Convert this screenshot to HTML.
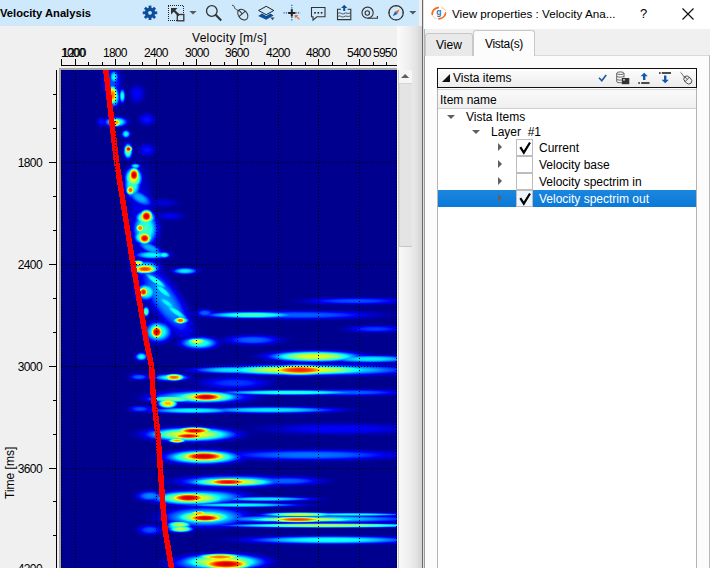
<!DOCTYPE html>
<html><head><meta charset="utf-8">
<style>
*{margin:0;padding:0;box-sizing:border-box}
html,body{width:710px;height:568px;overflow:hidden;background:#f0f0f0;font-family:"Liberation Sans",sans-serif;font-size:12px;color:#000}
body{position:relative}
.a{position:absolute;white-space:nowrap}
#hdr{left:0;top:0;width:419px;height:26px;background:#cee8fc}
#title{left:0;top:6px;font-weight:bold;font-size:11.2px;line-height:14px}
#sgrad{left:397px;top:26px;width:25px;height:542px;background:linear-gradient(to right,#fafafa 0%,#f8f8f8 12%,#efefef 45%,#e4e4e4 75%,#d2d2d2 100%)}
#split{left:422px;top:0;width:3px;height:568px;background:linear-gradient(to right,#6a6a6a 0,#6a6a6a 1px,#e0e0e0 1px,#e0e0e0 2px,#b4b4b4 2px)}
#dtitle{left:424px;top:0;width:286px;height:29px;background:#fff}
#dt{left:452px;top:7px;font-size:11.7px;line-height:14px}
.xl{font-size:12px;letter-spacing:-0.75px;line-height:12px;top:47px}
.yl{font-size:12px;letter-spacing:-0.6px;line-height:12px;right:668px}
#panel{left:424px;top:55px;width:286px;height:513px;background:#fcfcfc;border-top:1px solid #d9d9d9;border-right:1px solid #b8b8b8;border-left:1px solid #9c9c9c}
#tabv{left:425px;top:33px;width:48px;height:23px;background:#e9e9e9;border:1px solid #c8c8c8;border-bottom:none;border-radius:3px 3px 0 0}
#tabs{left:473px;top:30px;width:62px;height:26px;background:#fcfcfc;border:1px solid #c8c8c8;border-bottom:none;border-radius:3px 3px 0 0}
#tbox{left:437px;top:68px;width:260px;height:20px;border:1.5px solid #111;background:linear-gradient(#fdfdfd,#ececec)}
#list{left:437px;top:88px;width:260px;height:500px;background:#fff;border:1px solid #b4b4b4;border-top:none}
#ihdr{left:438px;top:89px;width:258px;height:20px;background:linear-gradient(#fafafa,#efefef);border-top:1px solid #d9d9d9;border-bottom:1px solid #d0d0d0}
.cb{position:absolute;left:516px;width:17px;height:17px;background:#fff;border:1px solid #bdbdbd}
.tx{position:absolute;font-size:12px;line-height:14px}
</style></head>
<body>
<div id="hdr" class="a"></div>
<div id="title" class="a">Velocity Analysis</div>
<svg class="a" style="left:130px;top:0" width="292" height="26" viewBox="130 0 292 26">
<!-- gear -->
<g transform="translate(150,12.8)" fill="#0c4e9c">
<circle r="5.2"/>
<g><rect x="-1.4" y="-7.2" width="2.8" height="3"/><rect x="-1.4" y="4.2" width="2.8" height="3"/><rect x="-7.2" y="-1.4" width="3" height="2.8"/><rect x="4.2" y="-1.4" width="3" height="2.8"/></g>
<g transform="rotate(45)"><rect x="-1.4" y="-7.2" width="2.8" height="3"/><rect x="-1.4" y="4.2" width="2.8" height="3"/><rect x="-7.2" y="-1.4" width="3" height="2.8"/><rect x="4.2" y="-1.4" width="3" height="2.8"/></g>
<circle r="1.9" fill="#cee8fc"/>
</g>
<!-- select -->
<path d="M168 5.5 L184 5.5 M168 20.5 L177 20.5 M168.5 6 L168.5 20 M183.5 6 L183.5 14" fill="none" stroke="#222" stroke-width="1" stroke-dasharray="1 1"/>
<rect x="177.3" y="14.5" width="6.5" height="6.3" fill="#cee8fc" stroke="#333" stroke-width="1.3"/>
<path d="M171 8 L177.5 8 L175.3 10.2 L179.8 14.7 L178.2 16.3 L173.7 11.8 L171 14.5 Z" fill="#333"/>
<path d="M189.4 11 L196.6 11 L193 14.6 Z" fill="#505a64"/>
<!-- magnifier -->
<circle cx="211.8" cy="11" r="5.3" fill="none" stroke="#333" stroke-width="1.3"/>
<path d="M215.6 14.8 L221.2 20.4" stroke="#333" stroke-width="2.1"/>
<!-- mouse -->
<path d="M232 5.5 C234.5 4.5 234 8 235.5 9 C236.8 10 237.5 9.8 238.6 11.2" fill="none" stroke="#333" stroke-width="1"/>
<g transform="translate(242.8,14.6) rotate(-40)" fill="none" stroke="#333" stroke-width="1">
<ellipse rx="4.3" ry="6"/><path d="M-4.3 -1 L4.3 -1 M0 -6 L0 -1"/>
</g>
<!-- layers -->
<path d="M266.2 6.3 L273.8 10.5 L266.2 14.7 L258.6 10.5 Z" fill="none" stroke="#222" stroke-width="1"/>
<path d="M258.2 16 L262 13.6 L266.2 16 L270.4 13.6 L273.6 15.6 L266.2 19.8 Z" fill="#0c4e9c"/>
<path d="M270.4 17.6 L274.6 17.6 L272.5 20.2 Z" fill="#444"/>
<!-- crosshair -->
<path d="M283.5 12.9 L300.5 12.9 M291.8 4.8 L291.8 21.2" stroke="#1c5cb0" stroke-width="1.2" stroke-dasharray="1.2 1.2"/>
<path d="M288.2 12.9 L295.4 12.9 M291.8 9.3 L291.8 16.5" stroke="#222" stroke-width="2"/>
<path d="M294.6 15 L298.2 15 L297 16.2 L299.8 19 L299 19.8 L296.2 17 L294.9 18.3 Z" fill="#ee6a1e"/>
<!-- comment -->
<path d="M311.5 7.5 L325 7.5 L325 16.8 L317 16.8 L313 20 L313 16.8 L311.5 16.8 Z" fill="none" stroke="#333" stroke-width="1.1"/>
<rect x="314.2" y="12" width="1.6" height="1.6" fill="#222"/><rect x="317.5" y="12" width="1.6" height="1.6" fill="#222"/><rect x="320.8" y="12" width="1.6" height="1.6" fill="#222"/>
<!-- upload chart -->
<path d="M341 9.3 L337.5 9.3 L337.5 19.6 L350.8 19.6 L350.8 9.3 L347.5 9.3" fill="none" stroke="#333" stroke-width="1.1"/>
<path d="M338 13.5 C340 11.5 342 15 344 13.5 C346 12 348 14.5 350.5 12.8 M338 16.6 C340 14.6 342 18 344 16.6 C346 15 348 17.6 350.5 15.8" fill="none" stroke="#444" stroke-width="0.9"/>
<path d="M344.2 4.8 L347.3 8 L345.2 8 L345.2 11 L343.2 11 L343.2 8 L341.1 8 Z" fill="#0c4e9c"/>
<!-- tape -->
<circle cx="367.6" cy="12.7" r="5.6" fill="none" stroke="#333" stroke-width="1.1"/><path d="M367.6 18.3 L377.4 18.3 L377.4 16" fill="none" stroke="#333" stroke-width="1.1"/>
<circle cx="367.3" cy="13" r="2.2" fill="none" stroke="#333" stroke-width="1.1"/>
<!-- compass -->
<circle cx="396.1" cy="12.8" r="7.2" fill="none" stroke="#333" stroke-width="1.2"/>
<path d="M396.1 5 L396.1 6.6 M396.1 19 L396.1 20.6 M388.3 12.8 L389.9 12.8 M402.3 12.8 L403.9 12.8" stroke="#333" stroke-width="1"/>
<path d="M399.5 9.4 L397.4 13.9 L395 11.5 Z" fill="#ee6a1e"/>
<path d="M392.7 16.2 L395 11.5 L397.4 13.9 Z" fill="#1c5cb0"/>
<path d="M409.2 11 L416.4 11 L412.8 14.6 Z" fill="#505a64"/>
</svg>


<!-- axes labels -->
<div class="a" style="left:192px;top:31px;font-size:12px;letter-spacing:0.3px;line-height:14px">Velocity [m/s]</div>
<div class="a xl" style="left:61px">1000</div>
<div class="a xl" style="left:62px">1200</div>
<div class="a xl" style="left:103px">1800</div>
<div class="a xl" style="left:144px">2400</div>
<div class="a xl" style="left:185px">3000</div>
<div class="a xl" style="left:225px">3600</div>
<div class="a xl" style="left:266px">4200</div>
<div class="a xl" style="left:306px">4800</div>
<div class="a xl" style="left:347px">5400</div>
<div class="a xl" style="left:373px">5950</div>

<svg class="a" style="left:0;top:0" width="420" height="568" viewBox="0 0 420 568">
  <!-- x axis -->
  <g fill="#000">
    <rect x="61" y="65" width="336" height="1"/>
    <rect x="61" y="59" width="1" height="7"/>
    <rect x="75" y="59" width="1" height="7"/>
    <rect x="88" y="62" width="1" height="4"/>
    <rect x="102" y="62" width="1" height="4"/>
    <rect x="115" y="59" width="1" height="7"/>
    <rect x="129" y="62" width="1" height="4"/>
    <rect x="142" y="62" width="1" height="4"/>
    <rect x="156" y="59" width="1" height="7"/>
    <rect x="169" y="62" width="1" height="4"/>
    <rect x="183" y="62" width="1" height="4"/>
    <rect x="196" y="59" width="1" height="7"/>
    <rect x="210" y="62" width="1" height="4"/>
    <rect x="224" y="62" width="1" height="4"/>
    <rect x="237" y="59" width="1" height="7"/>
    <rect x="251" y="62" width="1" height="4"/>
    <rect x="264" y="62" width="1" height="4"/>
    <rect x="278" y="59" width="1" height="7"/>
    <rect x="291" y="62" width="1" height="4"/>
    <rect x="305" y="62" width="1" height="4"/>
    <rect x="318" y="59" width="1" height="7"/>
    <rect x="332" y="62" width="1" height="4"/>
    <rect x="346" y="62" width="1" height="4"/>
    <rect x="359" y="59" width="1" height="7"/>
    <rect x="373" y="62" width="1" height="4"/>
    <rect x="386" y="62" width="1" height="4"/>
    <!-- y axis -->
    <rect x="56" y="70" width="1" height="498"/>
    <rect x="53" y="94" width="4" height="1"/>
    <rect x="53" y="128" width="4" height="1"/>
    <rect x="49" y="162" width="8" height="1"/>
    <rect x="53" y="196" width="4" height="1"/>
    <rect x="53" y="230" width="4" height="1"/>
    <rect x="49" y="264" width="8" height="1"/>
    <rect x="53" y="298" width="4" height="1"/>
    <rect x="53" y="332" width="4" height="1"/>
    <rect x="49" y="366" width="8" height="1"/>
    <rect x="53" y="400" width="4" height="1"/>
    <rect x="53" y="434" width="4" height="1"/>
    <rect x="49" y="468" width="8" height="1"/>
    <rect x="53" y="501" width="4" height="1"/>
    <rect x="53" y="535" width="4" height="1"/>
  </g>
  <!-- plot frame -->
  <rect x="59" y="68" width="339" height="502" fill="#a8a8a8"/><rect x="397" y="68" width="1" height="500" fill="#f4f4f4"/>
  <rect x="61" y="70" width="336" height="498" fill="#00008f"/>
</svg>
<!--HEAT--><svg class="a" style="left:61px;top:70px" width="336" height="498" viewBox="0 0 336 498">
<defs><radialGradient id="g0"><stop offset="0" stop-color="rgb(51,51,51)"/><stop offset="0.1" stop-color="rgb(51,51,51)"/><stop offset="0.2" stop-color="rgb(49,49,49)"/><stop offset="0.3" stop-color="rgb(45,45,45)"/><stop offset="0.4" stop-color="rgb(38,38,38)"/><stop offset="0.5" stop-color="rgb(29,29,29)"/><stop offset="0.6" stop-color="rgb(19,19,19)"/><stop offset="0.7" stop-color="rgb(11,11,11)"/><stop offset="0.8" stop-color="rgb(5,5,5)"/><stop offset="0.9" stop-color="rgb(2,2,2)"/><stop offset="1" stop-color="rgb(0,0,0)"/></radialGradient><radialGradient id="g1"><stop offset="0" stop-color="rgb(97,97,97)"/><stop offset="0.1" stop-color="rgb(96,96,96)"/><stop offset="0.2" stop-color="rgb(93,93,93)"/><stop offset="0.3" stop-color="rgb(86,86,86)"/><stop offset="0.4" stop-color="rgb(73,73,73)"/><stop offset="0.5" stop-color="rgb(55,55,55)"/><stop offset="0.6" stop-color="rgb(37,37,37)"/><stop offset="0.7" stop-color="rgb(21,21,21)"/><stop offset="0.8" stop-color="rgb(10,10,10)"/><stop offset="0.9" stop-color="rgb(4,4,4)"/><stop offset="1" stop-color="rgb(0,0,0)"/></radialGradient><radialGradient id="g2"><stop offset="0" stop-color="rgb(112,112,112)"/><stop offset="0.1" stop-color="rgb(112,112,112)"/><stop offset="0.2" stop-color="rgb(108,108,108)"/><stop offset="0.3" stop-color="rgb(99,99,99)"/><stop offset="0.4" stop-color="rgb(84,84,84)"/><stop offset="0.5" stop-color="rgb(64,64,64)"/><stop offset="0.6" stop-color="rgb(42,42,42)"/><stop offset="0.7" stop-color="rgb(24,24,24)"/><stop offset="0.8" stop-color="rgb(11,11,11)"/><stop offset="0.9" stop-color="rgb(4,4,4)"/><stop offset="1" stop-color="rgb(0,0,0)"/></radialGradient><radialGradient id="g3"><stop offset="0" stop-color="rgb(194,194,194)"/><stop offset="0.1" stop-color="rgb(193,193,193)"/><stop offset="0.2" stop-color="rgb(187,187,187)"/><stop offset="0.3" stop-color="rgb(172,172,172)"/><stop offset="0.4" stop-color="rgb(145,145,145)"/><stop offset="0.5" stop-color="rgb(110,110,110)"/><stop offset="0.6" stop-color="rgb(73,73,73)"/><stop offset="0.7" stop-color="rgb(41,41,41)"/><stop offset="0.8" stop-color="rgb(19,19,19)"/><stop offset="0.9" stop-color="rgb(7,7,7)"/><stop offset="1" stop-color="rgb(0,0,0)"/></radialGradient><radialGradient id="g4"><stop offset="0" stop-color="rgb(102,102,102)"/><stop offset="0.1" stop-color="rgb(102,102,102)"/><stop offset="0.2" stop-color="rgb(98,98,98)"/><stop offset="0.3" stop-color="rgb(90,90,90)"/><stop offset="0.4" stop-color="rgb(76,76,76)"/><stop offset="0.5" stop-color="rgb(58,58,58)"/><stop offset="0.6" stop-color="rgb(39,39,39)"/><stop offset="0.7" stop-color="rgb(22,22,22)"/><stop offset="0.8" stop-color="rgb(10,10,10)"/><stop offset="0.9" stop-color="rgb(4,4,4)"/><stop offset="1" stop-color="rgb(0,0,0)"/></radialGradient><radialGradient id="g5"><stop offset="0" stop-color="rgb(184,184,184)"/><stop offset="0.1" stop-color="rgb(183,183,183)"/><stop offset="0.2" stop-color="rgb(177,177,177)"/><stop offset="0.3" stop-color="rgb(163,163,163)"/><stop offset="0.4" stop-color="rgb(138,138,138)"/><stop offset="0.5" stop-color="rgb(105,105,105)"/><stop offset="0.6" stop-color="rgb(69,69,69)"/><stop offset="0.7" stop-color="rgb(39,39,39)"/><stop offset="0.8" stop-color="rgb(18,18,18)"/><stop offset="0.9" stop-color="rgb(7,7,7)"/><stop offset="1" stop-color="rgb(0,0,0)"/></radialGradient><radialGradient id="g6"><stop offset="0" stop-color="rgb(36,36,36)"/><stop offset="0.1" stop-color="rgb(36,36,36)"/><stop offset="0.2" stop-color="rgb(34,34,34)"/><stop offset="0.3" stop-color="rgb(32,32,32)"/><stop offset="0.4" stop-color="rgb(27,27,27)"/><stop offset="0.5" stop-color="rgb(20,20,20)"/><stop offset="0.6" stop-color="rgb(14,14,14)"/><stop offset="0.7" stop-color="rgb(8,8,8)"/><stop offset="0.8" stop-color="rgb(4,4,4)"/><stop offset="0.9" stop-color="rgb(1,1,1)"/><stop offset="1" stop-color="rgb(0,0,0)"/></radialGradient><radialGradient id="g7"><stop offset="0" stop-color="rgb(31,31,31)"/><stop offset="0.1" stop-color="rgb(30,30,30)"/><stop offset="0.2" stop-color="rgb(30,30,30)"/><stop offset="0.3" stop-color="rgb(27,27,27)"/><stop offset="0.4" stop-color="rgb(23,23,23)"/><stop offset="0.5" stop-color="rgb(17,17,17)"/><stop offset="0.6" stop-color="rgb(12,12,12)"/><stop offset="0.7" stop-color="rgb(7,7,7)"/><stop offset="0.8" stop-color="rgb(3,3,3)"/><stop offset="0.9" stop-color="rgb(1,1,1)"/><stop offset="1" stop-color="rgb(0,0,0)"/></radialGradient><radialGradient id="g8"><stop offset="0" stop-color="rgb(128,128,128)"/><stop offset="0.1" stop-color="rgb(127,127,127)"/><stop offset="0.2" stop-color="rgb(123,123,123)"/><stop offset="0.3" stop-color="rgb(113,113,113)"/><stop offset="0.4" stop-color="rgb(96,96,96)"/><stop offset="0.5" stop-color="rgb(73,73,73)"/><stop offset="0.6" stop-color="rgb(48,48,48)"/><stop offset="0.7" stop-color="rgb(27,27,27)"/><stop offset="0.8" stop-color="rgb(13,13,13)"/><stop offset="0.9" stop-color="rgb(5,5,5)"/><stop offset="1" stop-color="rgb(0,0,0)"/></radialGradient><radialGradient id="g9"><stop offset="0" stop-color="rgb(224,224,224)"/><stop offset="0.1" stop-color="rgb(223,223,223)"/><stop offset="0.2" stop-color="rgb(216,216,216)"/><stop offset="0.3" stop-color="rgb(199,199,199)"/><stop offset="0.4" stop-color="rgb(168,168,168)"/><stop offset="0.5" stop-color="rgb(128,128,128)"/><stop offset="0.6" stop-color="rgb(85,85,85)"/><stop offset="0.7" stop-color="rgb(48,48,48)"/><stop offset="0.8" stop-color="rgb(22,22,22)"/><stop offset="0.9" stop-color="rgb(8,8,8)"/><stop offset="1" stop-color="rgb(0,0,0)"/></radialGradient><radialGradient id="g10"><stop offset="0" stop-color="rgb(92,92,92)"/><stop offset="0.1" stop-color="rgb(91,91,91)"/><stop offset="0.2" stop-color="rgb(89,89,89)"/><stop offset="0.3" stop-color="rgb(81,81,81)"/><stop offset="0.4" stop-color="rgb(69,69,69)"/><stop offset="0.5" stop-color="rgb(52,52,52)"/><stop offset="0.6" stop-color="rgb(35,35,35)"/><stop offset="0.7" stop-color="rgb(20,20,20)"/><stop offset="0.8" stop-color="rgb(9,9,9)"/><stop offset="0.9" stop-color="rgb(3,3,3)"/><stop offset="1" stop-color="rgb(0,0,0)"/></radialGradient><radialGradient id="g11"><stop offset="0" stop-color="rgb(26,26,26)"/><stop offset="0.1" stop-color="rgb(25,25,25)"/><stop offset="0.2" stop-color="rgb(25,25,25)"/><stop offset="0.3" stop-color="rgb(23,23,23)"/><stop offset="0.4" stop-color="rgb(19,19,19)"/><stop offset="0.5" stop-color="rgb(15,15,15)"/><stop offset="0.6" stop-color="rgb(10,10,10)"/><stop offset="0.7" stop-color="rgb(5,5,5)"/><stop offset="0.8" stop-color="rgb(3,3,3)"/><stop offset="0.9" stop-color="rgb(1,1,1)"/><stop offset="1" stop-color="rgb(0,0,0)"/></radialGradient><radialGradient id="g12"><stop offset="0" stop-color="rgb(153,153,153)"/><stop offset="0.1" stop-color="rgb(152,152,152)"/><stop offset="0.2" stop-color="rgb(148,148,148)"/><stop offset="0.3" stop-color="rgb(135,135,135)"/><stop offset="0.4" stop-color="rgb(115,115,115)"/><stop offset="0.5" stop-color="rgb(87,87,87)"/><stop offset="0.6" stop-color="rgb(58,58,58)"/><stop offset="0.7" stop-color="rgb(33,33,33)"/><stop offset="0.8" stop-color="rgb(15,15,15)"/><stop offset="0.9" stop-color="rgb(6,6,6)"/><stop offset="1" stop-color="rgb(0,0,0)"/></radialGradient><radialGradient id="g13"><stop offset="0" stop-color="rgb(235,235,235)"/><stop offset="0.1" stop-color="rgb(234,234,234)"/><stop offset="0.2" stop-color="rgb(226,226,226)"/><stop offset="0.3" stop-color="rgb(208,208,208)"/><stop offset="0.4" stop-color="rgb(176,176,176)"/><stop offset="0.5" stop-color="rgb(134,134,134)"/><stop offset="0.6" stop-color="rgb(89,89,89)"/><stop offset="0.7" stop-color="rgb(50,50,50)"/><stop offset="0.8" stop-color="rgb(23,23,23)"/><stop offset="0.9" stop-color="rgb(9,9,9)"/><stop offset="1" stop-color="rgb(0,0,0)"/></radialGradient><radialGradient id="g14"><stop offset="0" stop-color="rgb(199,199,199)"/><stop offset="0.1" stop-color="rgb(198,198,198)"/><stop offset="0.2" stop-color="rgb(192,192,192)"/><stop offset="0.3" stop-color="rgb(176,176,176)"/><stop offset="0.4" stop-color="rgb(149,149,149)"/><stop offset="0.5" stop-color="rgb(113,113,113)"/><stop offset="0.6" stop-color="rgb(75,75,75)"/><stop offset="0.7" stop-color="rgb(42,42,42)"/><stop offset="0.8" stop-color="rgb(20,20,20)"/><stop offset="0.9" stop-color="rgb(7,7,7)"/><stop offset="1" stop-color="rgb(0,0,0)"/></radialGradient><radialGradient id="g15"><stop offset="0" stop-color="rgb(76,76,76)"/><stop offset="0.1" stop-color="rgb(76,76,76)"/><stop offset="0.2" stop-color="rgb(74,74,74)"/><stop offset="0.3" stop-color="rgb(68,68,68)"/><stop offset="0.4" stop-color="rgb(57,57,57)"/><stop offset="0.5" stop-color="rgb(44,44,44)"/><stop offset="0.6" stop-color="rgb(29,29,29)"/><stop offset="0.7" stop-color="rgb(16,16,16)"/><stop offset="0.8" stop-color="rgb(8,8,8)"/><stop offset="0.9" stop-color="rgb(3,3,3)"/><stop offset="1" stop-color="rgb(0,0,0)"/></radialGradient><radialGradient id="g16"><stop offset="0" stop-color="rgb(230,230,230)"/><stop offset="0.1" stop-color="rgb(228,228,228)"/><stop offset="0.2" stop-color="rgb(221,221,221)"/><stop offset="0.3" stop-color="rgb(203,203,203)"/><stop offset="0.4" stop-color="rgb(172,172,172)"/><stop offset="0.5" stop-color="rgb(131,131,131)"/><stop offset="0.6" stop-color="rgb(87,87,87)"/><stop offset="0.7" stop-color="rgb(49,49,49)"/><stop offset="0.8" stop-color="rgb(23,23,23)"/><stop offset="0.9" stop-color="rgb(9,9,9)"/><stop offset="1" stop-color="rgb(0,0,0)"/></radialGradient><radialGradient id="g17"><stop offset="0" stop-color="rgb(20,20,20)"/><stop offset="0.1" stop-color="rgb(20,20,20)"/><stop offset="0.2" stop-color="rgb(20,20,20)"/><stop offset="0.3" stop-color="rgb(18,18,18)"/><stop offset="0.4" stop-color="rgb(15,15,15)"/><stop offset="0.5" stop-color="rgb(12,12,12)"/><stop offset="0.6" stop-color="rgb(8,8,8)"/><stop offset="0.7" stop-color="rgb(4,4,4)"/><stop offset="0.8" stop-color="rgb(2,2,2)"/><stop offset="0.9" stop-color="rgb(1,1,1)"/><stop offset="1" stop-color="rgb(0,0,0)"/></radialGradient><radialGradient id="g18"><stop offset="0" stop-color="rgb(163,163,163)"/><stop offset="0.1" stop-color="rgb(162,162,162)"/><stop offset="0.2" stop-color="rgb(157,157,157)"/><stop offset="0.3" stop-color="rgb(145,145,145)"/><stop offset="0.4" stop-color="rgb(122,122,122)"/><stop offset="0.5" stop-color="rgb(93,93,93)"/><stop offset="0.6" stop-color="rgb(62,62,62)"/><stop offset="0.7" stop-color="rgb(35,35,35)"/><stop offset="0.8" stop-color="rgb(16,16,16)"/><stop offset="0.9" stop-color="rgb(6,6,6)"/><stop offset="1" stop-color="rgb(0,0,0)"/></radialGradient><radialGradient id="g19"><stop offset="0" stop-color="rgb(107,107,107)"/><stop offset="0.1" stop-color="rgb(107,107,107)"/><stop offset="0.2" stop-color="rgb(103,103,103)"/><stop offset="0.3" stop-color="rgb(95,95,95)"/><stop offset="0.4" stop-color="rgb(80,80,80)"/><stop offset="0.5" stop-color="rgb(61,61,61)"/><stop offset="0.6" stop-color="rgb(41,41,41)"/><stop offset="0.7" stop-color="rgb(23,23,23)"/><stop offset="0.8" stop-color="rgb(11,11,11)"/><stop offset="0.9" stop-color="rgb(4,4,4)"/><stop offset="1" stop-color="rgb(0,0,0)"/></radialGradient><radialGradient id="g20"><stop offset="0" stop-color="rgb(71,71,71)"/><stop offset="0.1" stop-color="rgb(71,71,71)"/><stop offset="0.2" stop-color="rgb(69,69,69)"/><stop offset="0.3" stop-color="rgb(63,63,63)"/><stop offset="0.4" stop-color="rgb(54,54,54)"/><stop offset="0.5" stop-color="rgb(41,41,41)"/><stop offset="0.6" stop-color="rgb(27,27,27)"/><stop offset="0.7" stop-color="rgb(15,15,15)"/><stop offset="0.8" stop-color="rgb(7,7,7)"/><stop offset="0.9" stop-color="rgb(3,3,3)"/><stop offset="1" stop-color="rgb(0,0,0)"/></radialGradient><radialGradient id="g21"><stop offset="0" stop-color="rgb(209,209,209)"/><stop offset="0.1" stop-color="rgb(208,208,208)"/><stop offset="0.2" stop-color="rgb(202,202,202)"/><stop offset="0.3" stop-color="rgb(185,185,185)"/><stop offset="0.4" stop-color="rgb(157,157,157)"/><stop offset="0.5" stop-color="rgb(119,119,119)"/><stop offset="0.6" stop-color="rgb(79,79,79)"/><stop offset="0.7" stop-color="rgb(45,45,45)"/><stop offset="0.8" stop-color="rgb(21,21,21)"/><stop offset="0.9" stop-color="rgb(8,8,8)"/><stop offset="1" stop-color="rgb(0,0,0)"/></radialGradient><radialGradient id="g22"><stop offset="0" stop-color="rgb(219,219,219)"/><stop offset="0.1" stop-color="rgb(218,218,218)"/><stop offset="0.2" stop-color="rgb(212,212,212)"/><stop offset="0.3" stop-color="rgb(194,194,194)"/><stop offset="0.4" stop-color="rgb(164,164,164)"/><stop offset="0.5" stop-color="rgb(125,125,125)"/><stop offset="0.6" stop-color="rgb(83,83,83)"/><stop offset="0.7" stop-color="rgb(47,47,47)"/><stop offset="0.8" stop-color="rgb(22,22,22)"/><stop offset="0.9" stop-color="rgb(8,8,8)"/><stop offset="1" stop-color="rgb(0,0,0)"/></radialGradient><radialGradient id="g23"><stop offset="0" stop-color="rgb(122,122,122)"/><stop offset="0.1" stop-color="rgb(122,122,122)"/><stop offset="0.2" stop-color="rgb(118,118,118)"/><stop offset="0.3" stop-color="rgb(108,108,108)"/><stop offset="0.4" stop-color="rgb(92,92,92)"/><stop offset="0.5" stop-color="rgb(70,70,70)"/><stop offset="0.6" stop-color="rgb(46,46,46)"/><stop offset="0.7" stop-color="rgb(26,26,26)"/><stop offset="0.8" stop-color="rgb(12,12,12)"/><stop offset="0.9" stop-color="rgb(5,5,5)"/><stop offset="1" stop-color="rgb(0,0,0)"/></radialGradient><radialGradient id="g24"><stop offset="0" stop-color="rgb(158,158,158)"/><stop offset="0.1" stop-color="rgb(157,157,157)"/><stop offset="0.2" stop-color="rgb(153,153,153)"/><stop offset="0.3" stop-color="rgb(140,140,140)"/><stop offset="0.4" stop-color="rgb(119,119,119)"/><stop offset="0.5" stop-color="rgb(90,90,90)"/><stop offset="0.6" stop-color="rgb(60,60,60)"/><stop offset="0.7" stop-color="rgb(34,34,34)"/><stop offset="0.8" stop-color="rgb(16,16,16)"/><stop offset="0.9" stop-color="rgb(6,6,6)"/><stop offset="1" stop-color="rgb(0,0,0)"/></radialGradient><radialGradient id="g25"><stop offset="0" stop-color="rgb(56,56,56)"/><stop offset="0.1" stop-color="rgb(56,56,56)"/><stop offset="0.2" stop-color="rgb(54,54,54)"/><stop offset="0.3" stop-color="rgb(50,50,50)"/><stop offset="0.4" stop-color="rgb(42,42,42)"/><stop offset="0.5" stop-color="rgb(32,32,32)"/><stop offset="0.6" stop-color="rgb(21,21,21)"/><stop offset="0.7" stop-color="rgb(12,12,12)"/><stop offset="0.8" stop-color="rgb(6,6,6)"/><stop offset="0.9" stop-color="rgb(2,2,2)"/><stop offset="1" stop-color="rgb(0,0,0)"/></radialGradient><radialGradient id="g26"><stop offset="0" stop-color="rgb(46,46,46)"/><stop offset="0.1" stop-color="rgb(46,46,46)"/><stop offset="0.2" stop-color="rgb(44,44,44)"/><stop offset="0.3" stop-color="rgb(41,41,41)"/><stop offset="0.4" stop-color="rgb(34,34,34)"/><stop offset="0.5" stop-color="rgb(26,26,26)"/><stop offset="0.6" stop-color="rgb(17,17,17)"/><stop offset="0.7" stop-color="rgb(10,10,10)"/><stop offset="0.8" stop-color="rgb(5,5,5)"/><stop offset="0.9" stop-color="rgb(2,2,2)"/><stop offset="1" stop-color="rgb(0,0,0)"/></radialGradient><radialGradient id="g27"><stop offset="0" stop-color="rgb(214,214,214)"/><stop offset="0.1" stop-color="rgb(213,213,213)"/><stop offset="0.2" stop-color="rgb(207,207,207)"/><stop offset="0.3" stop-color="rgb(190,190,190)"/><stop offset="0.4" stop-color="rgb(161,161,161)"/><stop offset="0.5" stop-color="rgb(122,122,122)"/><stop offset="0.6" stop-color="rgb(81,81,81)"/><stop offset="0.7" stop-color="rgb(46,46,46)"/><stop offset="0.8" stop-color="rgb(21,21,21)"/><stop offset="0.9" stop-color="rgb(8,8,8)"/><stop offset="1" stop-color="rgb(0,0,0)"/></radialGradient><radialGradient id="g28"><stop offset="0" stop-color="rgb(178,178,178)"/><stop offset="0.1" stop-color="rgb(178,178,178)"/><stop offset="0.2" stop-color="rgb(172,172,172)"/><stop offset="0.3" stop-color="rgb(158,158,158)"/><stop offset="0.4" stop-color="rgb(134,134,134)"/><stop offset="0.5" stop-color="rgb(102,102,102)"/><stop offset="0.6" stop-color="rgb(68,68,68)"/><stop offset="0.7" stop-color="rgb(38,38,38)"/><stop offset="0.8" stop-color="rgb(18,18,18)"/><stop offset="0.9" stop-color="rgb(7,7,7)"/><stop offset="1" stop-color="rgb(0,0,0)"/></radialGradient><radialGradient id="g29"><stop offset="0" stop-color="rgb(61,61,61)"/><stop offset="0.1" stop-color="rgb(61,61,61)"/><stop offset="0.2" stop-color="rgb(59,59,59)"/><stop offset="0.3" stop-color="rgb(54,54,54)"/><stop offset="0.4" stop-color="rgb(46,46,46)"/><stop offset="0.5" stop-color="rgb(35,35,35)"/><stop offset="0.6" stop-color="rgb(23,23,23)"/><stop offset="0.7" stop-color="rgb(13,13,13)"/><stop offset="0.8" stop-color="rgb(6,6,6)"/><stop offset="0.9" stop-color="rgb(2,2,2)"/><stop offset="1" stop-color="rgb(0,0,0)"/></radialGradient><radialGradient id="g30"><stop offset="0" stop-color="rgb(66,66,66)"/><stop offset="0.1" stop-color="rgb(66,66,66)"/><stop offset="0.2" stop-color="rgb(64,64,64)"/><stop offset="0.3" stop-color="rgb(59,59,59)"/><stop offset="0.4" stop-color="rgb(50,50,50)"/><stop offset="0.5" stop-color="rgb(38,38,38)"/><stop offset="0.6" stop-color="rgb(25,25,25)"/><stop offset="0.7" stop-color="rgb(14,14,14)"/><stop offset="0.8" stop-color="rgb(7,7,7)"/><stop offset="0.9" stop-color="rgb(2,2,2)"/><stop offset="1" stop-color="rgb(0,0,0)"/></radialGradient><radialGradient id="g31"><stop offset="0" stop-color="rgb(143,143,143)"/><stop offset="0.1" stop-color="rgb(142,142,142)"/><stop offset="0.2" stop-color="rgb(138,138,138)"/><stop offset="0.3" stop-color="rgb(126,126,126)"/><stop offset="0.4" stop-color="rgb(107,107,107)"/><stop offset="0.5" stop-color="rgb(81,81,81)"/><stop offset="0.6" stop-color="rgb(54,54,54)"/><stop offset="0.7" stop-color="rgb(31,31,31)"/><stop offset="0.8" stop-color="rgb(14,14,14)"/><stop offset="0.9" stop-color="rgb(5,5,5)"/><stop offset="1" stop-color="rgb(0,0,0)"/></radialGradient><radialGradient id="g32"><stop offset="0" stop-color="rgb(148,148,148)"/><stop offset="0.1" stop-color="rgb(147,147,147)"/><stop offset="0.2" stop-color="rgb(143,143,143)"/><stop offset="0.3" stop-color="rgb(131,131,131)"/><stop offset="0.4" stop-color="rgb(111,111,111)"/><stop offset="0.5" stop-color="rgb(84,84,84)"/><stop offset="0.6" stop-color="rgb(56,56,56)"/><stop offset="0.7" stop-color="rgb(32,32,32)"/><stop offset="0.8" stop-color="rgb(15,15,15)"/><stop offset="0.9" stop-color="rgb(6,6,6)"/><stop offset="1" stop-color="rgb(0,0,0)"/></radialGradient>
<filter id="jet" filterUnits="userSpaceOnUse" x="0" y="0" width="336" height="498" color-interpolation-filters="sRGB">
<feComponentTransfer>
<feFuncR type="table" tableValues="0 0 0 0 0.5 1 1 1 0.5"/>
<feFuncG type="table" tableValues="0 0 0.5 1 1 1 0.5 0 0"/>
<feFuncB type="table" tableValues="0.56 1 1 1 0.5 0 0 0 0"/>
</feComponentTransfer>
</filter>
</defs>
<g filter="url(#jet)">
<rect x="0" y="0" width="336" height="498" fill="#000"/>
<ellipse cx="51.0" cy="12.0" rx="13.6" ry="23.8" fill="url(#g0)" style="mix-blend-mode:lighten"/>
<ellipse cx="53.0" cy="7.0" rx="6.4" ry="9.6" fill="url(#g1)" style="mix-blend-mode:lighten"/>
<ellipse cx="53.0" cy="27.0" rx="8.5" ry="15.3" fill="url(#g2)" style="mix-blend-mode:lighten"/>
<ellipse cx="51.5" cy="25.0" rx="8.1" ry="14.3" fill="url(#g3)" style="mix-blend-mode:lighten"/>
<ellipse cx="61.3" cy="26.0" rx="4.4" ry="10.7" fill="url(#g4)" style="mix-blend-mode:lighten"/>
<ellipse cx="55.0" cy="52.0" rx="17.0" ry="7.6" fill="url(#g2)" style="mix-blend-mode:lighten"/>
<ellipse cx="55.5" cy="52.5" rx="7.3" ry="6.1" fill="url(#g5)" style="mix-blend-mode:lighten"/>
<ellipse cx="86.0" cy="49.5" rx="12.0" ry="9.0" fill="url(#g6)" style="mix-blend-mode:lighten"/>
<ellipse cx="76.0" cy="24.0" rx="11.2" ry="13.4" fill="url(#g7)" style="mix-blend-mode:lighten"/>
<ellipse cx="65.0" cy="64.0" rx="6.4" ry="6.1" fill="url(#g1)" style="mix-blend-mode:lighten"/>
<ellipse cx="67.0" cy="81.0" rx="6.6" ry="11.7" fill="url(#g8)" style="mix-blend-mode:lighten"/>
<ellipse cx="67.5" cy="79.0" rx="5.7" ry="5.0" fill="url(#g9)" style="mix-blend-mode:lighten"/>
<ellipse cx="86.0" cy="80.0" rx="12.0" ry="9.0" fill="url(#g6)" style="mix-blend-mode:lighten"/>
<ellipse cx="74.5" cy="96.0" rx="7.5" ry="4.2" fill="url(#g10)" style="mix-blend-mode:lighten"/>
<ellipse cx="41.0" cy="52.0" rx="8.0" ry="7.0" fill="url(#g6)" style="mix-blend-mode:lighten"/>
<ellipse cx="79.0" cy="145.0" rx="18.7" ry="74.6" fill="url(#g11)" style="mix-blend-mode:lighten"/>
<ellipse cx="71.5" cy="114.0" rx="11.9" ry="21.7" fill="url(#g2)" style="mix-blend-mode:lighten"/>
<ellipse cx="72.5" cy="108.0" rx="12.6" ry="15.7" fill="url(#g12)" style="mix-blend-mode:lighten"/>
<ellipse cx="73.0" cy="105.0" rx="8.2" ry="10.8" fill="url(#g13)" style="mix-blend-mode:lighten"/>
<ellipse cx="69.5" cy="120.0" rx="6.5" ry="7.6" fill="url(#g14)" style="mix-blend-mode:lighten"/>
<ellipse cx="84.5" cy="159.0" rx="18.7" ry="25.5" fill="url(#g2)" style="mix-blend-mode:lighten"/>
<ellipse cx="79.0" cy="128.0" rx="20.7" ry="9.3" fill="url(#g15)" transform="rotate(30 79 128)" style="mix-blend-mode:lighten"/>
<ellipse cx="89.0" cy="178.0" rx="20.7" ry="7.7" fill="url(#g15)" transform="rotate(25 89 178)" style="mix-blend-mode:lighten"/>
<ellipse cx="84.5" cy="148.0" rx="14.0" ry="10.5" fill="url(#g12)" style="mix-blend-mode:lighten"/>
<ellipse cx="85.4" cy="146.3" rx="9.6" ry="9.6" fill="url(#g13)" style="mix-blend-mode:lighten"/>
<ellipse cx="79.2" cy="158.0" rx="6.7" ry="6.7" fill="url(#g3)" style="mix-blend-mode:lighten"/>
<ellipse cx="83.0" cy="167.0" rx="14.0" ry="10.5" fill="url(#g12)" style="mix-blend-mode:lighten"/>
<ellipse cx="83.6" cy="168.3" rx="9.8" ry="8.6" fill="url(#g16)" style="mix-blend-mode:lighten"/>
<ellipse cx="109.0" cy="146.0" rx="20.8" ry="6.5" fill="url(#g11)" style="mix-blend-mode:lighten"/>
<ellipse cx="91.0" cy="185.0" rx="25.5" ry="6.1" fill="url(#g1)" style="mix-blend-mode:lighten"/>
<ellipse cx="102.0" cy="133.0" rx="23.4" ry="6.5" fill="url(#g17)" style="mix-blend-mode:lighten"/>
<ellipse cx="103.0" cy="185.0" rx="8.9" ry="4.7" fill="url(#g4)" style="mix-blend-mode:lighten"/>
<ellipse cx="77.0" cy="193.0" rx="9.1" ry="4.1" fill="url(#g18)" style="mix-blend-mode:lighten"/>
<ellipse cx="85.0" cy="198.0" rx="20.9" ry="10.5" fill="url(#g19)" style="mix-blend-mode:lighten"/>
<ellipse cx="104.0" cy="230.0" rx="64.3" ry="21.4" fill="url(#g20)" transform="rotate(56 104 230)" style="mix-blend-mode:lighten"/>
<ellipse cx="84.0" cy="199.0" rx="18.2" ry="6.7" fill="url(#g21)" style="mix-blend-mode:lighten"/>
<ellipse cx="95.0" cy="211.0" rx="22.7" ry="5.9" fill="url(#g19)" transform="rotate(35 95 211)" style="mix-blend-mode:lighten"/>
<ellipse cx="85.0" cy="222.0" rx="15.3" ry="12.7" fill="url(#g2)" style="mix-blend-mode:lighten"/>
<ellipse cx="84.0" cy="221.0" rx="9.8" ry="9.8" fill="url(#g8)" style="mix-blend-mode:lighten"/>
<ellipse cx="82.5" cy="222.0" rx="7.5" ry="7.7" fill="url(#g22)" style="mix-blend-mode:lighten"/>
<ellipse cx="102.0" cy="221.0" rx="21.4" ry="6.0" fill="url(#g4)" transform="rotate(40 102 221)" style="mix-blend-mode:lighten"/>
<ellipse cx="106.0" cy="233.0" rx="18.2" ry="6.1" fill="url(#g1)" transform="rotate(35 106 233)" style="mix-blend-mode:lighten"/>
<ellipse cx="85.0" cy="241.6" rx="5.0" ry="7.5" fill="url(#g23)" style="mix-blend-mode:lighten"/>
<ellipse cx="115.0" cy="242.0" rx="23.1" ry="6.0" fill="url(#g4)" transform="rotate(35 115 242)" style="mix-blend-mode:lighten"/>
<ellipse cx="119.4" cy="250.4" rx="13.1" ry="5.5" fill="url(#g8)" style="mix-blend-mode:lighten"/>
<ellipse cx="119.4" cy="250.4" rx="9.1" ry="5.2" fill="url(#g14)" style="mix-blend-mode:lighten"/>
<ellipse cx="97.0" cy="262.0" rx="20.4" ry="15.3" fill="url(#g2)" style="mix-blend-mode:lighten"/>
<ellipse cx="96.0" cy="261.0" rx="14.8" ry="13.5" fill="url(#g8)" style="mix-blend-mode:lighten"/>
<ellipse cx="95.7" cy="262.0" rx="9.6" ry="10.1" fill="url(#g13)" style="mix-blend-mode:lighten"/>
<ellipse cx="138.0" cy="273.0" rx="27.9" ry="9.2" fill="url(#g19)" style="mix-blend-mode:lighten"/>
<ellipse cx="136.0" cy="271.5" rx="16.3" ry="5.1" fill="url(#g24)" style="mix-blend-mode:lighten"/>
<ellipse cx="124.0" cy="201.0" rx="18.9" ry="5.0" fill="url(#g10)" style="mix-blend-mode:lighten"/>
<ellipse cx="144.0" cy="243.0" rx="13.2" ry="5.8" fill="url(#g25)" style="mix-blend-mode:lighten"/>
<ellipse cx="191.0" cy="245.0" rx="71.4" ry="5.1" fill="url(#g2)" style="mix-blend-mode:lighten"/>
<ellipse cx="239.0" cy="245.0" rx="115.1" ry="6.6" fill="url(#g25)" style="mix-blend-mode:lighten"/>
<ellipse cx="294.0" cy="231.0" rx="76.5" ry="5.1" fill="url(#g0)" style="mix-blend-mode:lighten"/>
<ellipse cx="314.0" cy="259.0" rx="44.3" ry="5.3" fill="url(#g26)" style="mix-blend-mode:lighten"/>
<ellipse cx="192.0" cy="270.0" rx="42.8" ry="7.4" fill="url(#g25)" style="mix-blend-mode:lighten"/>
<ellipse cx="254.0" cy="286.5" rx="68.3" ry="8.1" fill="url(#g12)" style="mix-blend-mode:lighten"/>
<ellipse cx="309.0" cy="289.0" rx="66.2" ry="5.7" fill="url(#g10)" style="mix-blend-mode:lighten"/>
<ellipse cx="259.0" cy="300.0" rx="136.5" ry="8.2" fill="url(#g1)" style="mix-blend-mode:lighten"/>
<ellipse cx="239.0" cy="300.0" rx="122.1" ry="7.6" fill="url(#g24)" style="mix-blend-mode:lighten"/>
<ellipse cx="239.0" cy="300.0" rx="52.8" ry="7.7" fill="url(#g27)" style="mix-blend-mode:lighten"/>
<ellipse cx="174.0" cy="300.0" rx="65.3" ry="5.6" fill="url(#g10)" style="mix-blend-mode:lighten"/>
<ellipse cx="174.0" cy="313.0" rx="53.1" ry="8.9" fill="url(#g26)" style="mix-blend-mode:lighten"/>
<ellipse cx="80.4" cy="286.7" rx="9.1" ry="6.1" fill="url(#g1)" style="mix-blend-mode:lighten"/>
<ellipse cx="110.0" cy="307.5" rx="26.7" ry="5.3" fill="url(#g4)" style="mix-blend-mode:lighten"/>
<ellipse cx="113.0" cy="307.3" rx="15.6" ry="5.2" fill="url(#g14)" style="mix-blend-mode:lighten"/>
<ellipse cx="78.0" cy="307.0" rx="14.8" ry="4.9" fill="url(#g25)" style="mix-blend-mode:lighten"/>
<ellipse cx="139.0" cy="327.0" rx="72.8" ry="9.6" fill="url(#g1)" style="mix-blend-mode:lighten"/>
<ellipse cx="144.0" cy="327.0" rx="51.5" ry="8.5" fill="url(#g24)" style="mix-blend-mode:lighten"/>
<ellipse cx="145.0" cy="327.0" rx="30.1" ry="6.8" fill="url(#g13)" style="mix-blend-mode:lighten"/>
<ellipse cx="106.8" cy="333.4" rx="14.2" ry="7.1" fill="url(#g28)" style="mix-blend-mode:lighten"/>
<ellipse cx="112.0" cy="329.0" rx="39.0" ry="5.2" fill="url(#g8)" style="mix-blend-mode:lighten"/>
<ellipse cx="132.0" cy="340.5" rx="67.3" ry="4.8" fill="url(#g1)" style="mix-blend-mode:lighten"/>
<ellipse cx="79.0" cy="339.0" rx="17.0" ry="5.1" fill="url(#g0)" style="mix-blend-mode:lighten"/>
<ellipse cx="131.0" cy="365.0" rx="56.9" ry="10.7" fill="url(#g4)" style="mix-blend-mode:lighten"/>
<ellipse cx="130.0" cy="364.5" rx="65.1" ry="10.2" fill="url(#g24)" style="mix-blend-mode:lighten"/>
<ellipse cx="133.5" cy="360.8" rx="27.9" ry="5.4" fill="url(#g16)" style="mix-blend-mode:lighten"/>
<ellipse cx="127.5" cy="366.0" rx="28.4" ry="5.0" fill="url(#g9)" style="mix-blend-mode:lighten"/>
<ellipse cx="116.0" cy="370.5" rx="12.7" ry="3.5" fill="url(#g5)" style="mix-blend-mode:lighten"/>
<ellipse cx="229.0" cy="322.5" rx="113.4" ry="3.9" fill="url(#g19)" style="mix-blend-mode:lighten"/>
<ellipse cx="289.0" cy="322.5" rx="82.2" ry="4.9" fill="url(#g25)" style="mix-blend-mode:lighten"/>
<ellipse cx="209.0" cy="340.0" rx="102.6" ry="4.9" fill="url(#g10)" style="mix-blend-mode:lighten"/>
<ellipse cx="279.0" cy="359.0" rx="115.5" ry="8.4" fill="url(#g7)" style="mix-blend-mode:lighten"/>
<ellipse cx="249.0" cy="385.0" rx="136.0" ry="8.0" fill="url(#g29)" style="mix-blend-mode:lighten"/>
<ellipse cx="143.0" cy="387.0" rx="51.6" ry="10.7" fill="url(#g4)" style="mix-blend-mode:lighten"/>
<ellipse cx="142.0" cy="387.0" rx="54.3" ry="10.2" fill="url(#g24)" style="mix-blend-mode:lighten"/>
<ellipse cx="143.0" cy="386.4" rx="38.4" ry="7.7" fill="url(#g13)" style="mix-blend-mode:lighten"/>
<ellipse cx="172.0" cy="411.5" rx="80.1" ry="8.7" fill="url(#g4)" style="mix-blend-mode:lighten"/>
<ellipse cx="171.0" cy="412.0" rx="67.8" ry="6.8" fill="url(#g24)" style="mix-blend-mode:lighten"/>
<ellipse cx="167.0" cy="412.0" rx="36.9" ry="5.8" fill="url(#g9)" style="mix-blend-mode:lighten"/>
<ellipse cx="224.0" cy="411.0" rx="57.6" ry="6.6" fill="url(#g25)" style="mix-blend-mode:lighten"/>
<ellipse cx="139.0" cy="427.0" rx="67.6" ry="10.7" fill="url(#g4)" style="mix-blend-mode:lighten"/>
<ellipse cx="131.0" cy="428.0" rx="57.0" ry="10.2" fill="url(#g24)" style="mix-blend-mode:lighten"/>
<ellipse cx="127.5" cy="427.8" rx="30.1" ry="7.2" fill="url(#g13)" style="mix-blend-mode:lighten"/>
<ellipse cx="89.0" cy="426.0" rx="20.3" ry="7.8" fill="url(#g30)" style="mix-blend-mode:lighten"/>
<ellipse cx="144.0" cy="447.0" rx="62.3" ry="14.7" fill="url(#g4)" style="mix-blend-mode:lighten"/>
<ellipse cx="143.0" cy="447.0" rx="46.1" ry="10.2" fill="url(#g24)" style="mix-blend-mode:lighten"/>
<ellipse cx="144.0" cy="448.0" rx="30.1" ry="6.3" fill="url(#g13)" style="mix-blend-mode:lighten"/>
<ellipse cx="138.0" cy="443.0" rx="13.9" ry="3.2" fill="url(#g5)" style="mix-blend-mode:lighten"/>
<ellipse cx="117.5" cy="456.5" rx="19.2" ry="6.5" fill="url(#g19)" style="mix-blend-mode:lighten"/>
<ellipse cx="118.4" cy="454.6" rx="18.2" ry="5.2" fill="url(#g31)" style="mix-blend-mode:lighten"/>
<ellipse cx="119.8" cy="459.0" rx="18.2" ry="5.2" fill="url(#g31)" style="mix-blend-mode:lighten"/>
<ellipse cx="179.0" cy="435.0" rx="91.0" ry="3.4" fill="url(#g1)" style="mix-blend-mode:lighten"/>
<ellipse cx="157.0" cy="493.0" rx="67.6" ry="12.0" fill="url(#g4)" style="mix-blend-mode:lighten"/>
<ellipse cx="161.0" cy="492.0" rx="62.4" ry="11.9" fill="url(#g24)" style="mix-blend-mode:lighten"/>
<ellipse cx="165.0" cy="494.0" rx="41.1" ry="8.4" fill="url(#g13)" style="mix-blend-mode:lighten"/>
<ellipse cx="159.0" cy="487.0" rx="33.8" ry="5.2" fill="url(#g3)" style="mix-blend-mode:lighten"/>
<ellipse cx="89.0" cy="460.0" rx="18.7" ry="7.6" fill="url(#g0)" style="mix-blend-mode:lighten"/>
<ellipse cx="204.0" cy="429.0" rx="74.6" ry="3.5" fill="url(#g10)" style="mix-blend-mode:lighten"/>
<ellipse cx="249.0" cy="449.0" rx="158.6" ry="5.6" fill="url(#g10)" style="mix-blend-mode:lighten"/>
<ellipse cx="242.0" cy="449.5" rx="95.0" ry="3.7" fill="url(#g24)" style="mix-blend-mode:lighten"/>
<ellipse cx="237.0" cy="449.5" rx="48.7" ry="4.3" fill="url(#g21)" style="mix-blend-mode:lighten"/>
<ellipse cx="289.0" cy="444.5" rx="89.0" ry="2.4" fill="url(#g4)" style="mix-blend-mode:lighten"/>
<ellipse cx="239.0" cy="444.5" rx="57.2" ry="3.4" fill="url(#g32)" style="mix-blend-mode:lighten"/>
<ellipse cx="279.0" cy="456.0" rx="104.7" ry="2.4" fill="url(#g19)" style="mix-blend-mode:lighten"/>
<ellipse cx="265.0" cy="455.5" rx="156.0" ry="3.4" fill="url(#g31)" style="mix-blend-mode:lighten"/>
<ellipse cx="269.0" cy="470.0" rx="124.6" ry="6.0" fill="url(#g4)" style="mix-blend-mode:lighten"/>
</g>
<polyline points="44.6,-2 52.5,66 55.3,90 71.3,190 86,275 90.6,296 92,323 97,365 101.5,430 104.1,460 110.9,500" fill="none" stroke="#f00" stroke-width="5.5" shape-rendering="crispEdges"/><line x1="0.5" y1="0" x2="0.5" y2="498" stroke="#000" stroke-width="1" stroke-dasharray="1 2"/><line x1="14.5" y1="0" x2="14.5" y2="498" stroke="#000" stroke-width="1" stroke-dasharray="1 2"/><line x1="54.5" y1="0" x2="54.5" y2="498" stroke="#000" stroke-width="1" stroke-dasharray="1 2"/><line x1="95.5" y1="0" x2="95.5" y2="498" stroke="#000" stroke-width="1" stroke-dasharray="1 2"/><line x1="135.5" y1="0" x2="135.5" y2="498" stroke="#000" stroke-width="1" stroke-dasharray="1 2"/><line x1="176.5" y1="0" x2="176.5" y2="498" stroke="#000" stroke-width="1" stroke-dasharray="1 2"/><line x1="217.5" y1="0" x2="217.5" y2="498" stroke="#000" stroke-width="1" stroke-dasharray="1 2"/><line x1="257.5" y1="0" x2="257.5" y2="498" stroke="#000" stroke-width="1" stroke-dasharray="1 2"/><line x1="298.5" y1="0" x2="298.5" y2="498" stroke="#000" stroke-width="1" stroke-dasharray="1 2"/><line x1="335.5" y1="0" x2="335.5" y2="498" stroke="#000" stroke-width="1" stroke-dasharray="1 2"/><line x1="0" y1="92.5" x2="336" y2="92.5" stroke="#000" stroke-width="1" stroke-dasharray="1 2"/><line x1="0" y1="194.5" x2="336" y2="194.5" stroke="#000" stroke-width="1" stroke-dasharray="1 2"/><line x1="0" y1="296.5" x2="336" y2="296.5" stroke="#000" stroke-width="1" stroke-dasharray="1 2"/><line x1="0" y1="398.5" x2="336" y2="398.5" stroke="#000" stroke-width="1" stroke-dasharray="1 2"/></svg><!--/HEAT-->

<div class="a yl" style="top:157px">1800</div>
<div class="a yl" style="top:259px">2400</div>
<div class="a yl" style="top:361px">3000</div>
<div class="a yl" style="top:463px">3600</div>
<div class="a yl" style="top:563px">4200</div>
<div class="a" style="left:-16px;top:466px;width:52px;text-align:center;font-size:12px;line-height:14px;transform:rotate(-90deg)">Time [ms]</div>

<div id="sgrad" class="a"></div>
<div class="a" style="left:399px;top:84px;width:13px;height:163px;background:#e4e4e4;border-bottom:1px solid #c6c6c6;border-left:1px solid #d8d8d8"></div>
<div class="a" style="left:399px;top:70px;width:13px;height:14px;background:#f6f6f6;border-bottom:1px solid #d4d4d4"></div>
<svg class="a" style="left:399px;top:70px" width="13" height="14"><path d="M2 8 L6.2 4 L10.2 8 Z" fill="#606060"/></svg>
<div class="a" style="left:398px;top:70px;width:1px;height:498px;background:#c8c8c8"></div>
<div id="split" class="a"></div>

<!-- right dialog -->
<div id="dtitle" class="a"></div>

<svg class="a" style="left:430px;top:5px" width="18" height="16" viewBox="430 5 18 16">
<path d="M438.2 7.6 C434.5 8 432 11 432.2 14.5" fill="none" stroke="#f26b1d" stroke-width="1.7" stroke-linecap="round"/>
<path d="M445.6 13.2 C445.2 16 442.5 18.5 438.8 18.8" fill="none" stroke="#f26b1d" stroke-width="1.7" stroke-linecap="round"/>
<path d="M441.5 7.8 C443 8 444.5 9 445.5 10.6" fill="none" stroke="#f9b48a" stroke-width="1" stroke-linecap="round"/>
<path d="M436 18.4 C434.6 18 433.4 17 432.8 16" fill="none" stroke="#f9c8a8" stroke-width="1" stroke-linecap="round"/>
<text x="436.3" y="15.2" font-family="Liberation Sans" font-weight="bold" font-size="8.5" fill="#2a73b8">g</text>
</svg>
<div id="dt" class="a">View properties : Velocity Ana...</div>
<div class="a" style="left:640px;top:6px;font-size:13px;line-height:16px">?</div>
<svg class="a" style="left:681px;top:7px" width="14" height="14"><path d="M1.5 1.5 L12.5 12.5 M12.5 1.5 L1.5 12.5" stroke="#111" stroke-width="1.2"/></svg>

<div id="panel" class="a"></div>
<div id="tabv" class="a"></div>
<div id="tabs" class="a"></div>
<div class="a tx" style="left:436px;top:38px">View</div>
<div class="a tx" style="left:485px;top:37px;letter-spacing:-0.3px">Vista(s)</div>

<div id="list" class="a"></div>
<div id="tbox" class="a"></div>
<svg class="a" style="left:441px;top:73px" width="10" height="10"><path d="M1 9 L9 9 L9 1 Z" fill="#111"/></svg>
<div class="a tx" style="left:453px;top:71px">Vista items</div>
<svg class="a" style="left:590px;top:68px" width="106" height="20" viewBox="590 68 106 20">
<path d="M599 77.8 L601.8 80.8 L606.2 75" fill="none" stroke="#1a56a8" stroke-width="1.6"/>
<ellipse cx="620.3" cy="73.2" rx="3.6" ry="1.3" fill="none" stroke="#555" stroke-width="0.9"/>
<path d="M616.7 73.2 L616.7 81.8 C617 83 623.6 83 624 81.8 M616.7 76.2 C617 77.4 623.6 77.4 624 76.2 M616.7 79 C617 80.2 621 80.3 621.6 80 M624 73.2 L624 77.5" fill="none" stroke="#555" stroke-width="0.9"/>
<rect x="621.8" y="78" width="7.5" height="6.2" fill="#333"/>
<rect x="623" y="79.2" width="2" height="1.3" fill="#ddd"/>
<path d="M644.2 72.7 L647.8 76.3 L645.4 76.3 L645.4 80 L643 80 L643 76.3 L640.6 76.3 Z" fill="#1256b0"/>
<rect x="638.3" y="82.2" width="1.6" height="1.6" fill="#222"/><rect x="641.2" y="82.2" width="8.3" height="1.6" fill="#222"/>
<rect x="659" y="72.2" width="1.6" height="1.6" fill="#222"/><rect x="661.8" y="72.2" width="9.2" height="1.6" fill="#222"/>
<path d="M665.2 83.3 L668.8 79.7 L666.4 79.7 L666.4 75.5 L664 75.5 L664 79.7 L661.6 79.7 Z" fill="#1256b0"/>
<path d="M680.5 72.3 C682 73.5 682.5 75 684.5 77" fill="none" stroke="#444" stroke-width="0.9"/>
<g transform="translate(687.8,80) rotate(-45)" fill="none" stroke="#444" stroke-width="0.9"><ellipse rx="3.2" ry="4.6"/><path d="M-3.2 -0.8 L3.2 -0.8 M0 -4.6 L0 -0.8"/></g>
</svg>
<div id="ihdr" class="a"></div>
<div class="a tx" style="left:440px;top:93px">Item name</div>

<div class="a" style="left:438px;top:190px;width:258px;height:17px;background:linear-gradient(#1b86de,#0b79d8)"></div>
<svg class="a" style="left:440px;top:110px" width="80" height="100">
  <path d="M7 5 L15 5 L11 9 Z" fill="#606060"/>
  <path d="M32 20 L40 20 L36 24 Z" fill="#606060"/>
  <path d="M58 33 L62 37 L58 41 Z" fill="#606060"/>
  <path d="M58 50 L62 54 L58 58 Z" fill="#606060"/>
  <path d="M58 67 L62 71 L58 75 Z" fill="#606060"/>
  <path d="M58 84 L62 88 L58 92 Z" fill="#606060"/>
</svg>
<div class="a tx" style="left:466px;top:110px">Vista Items</div>
<div class="a tx" style="left:491px;top:125px">Layer&nbsp; #1</div>
<div class="cb" style="top:139px"></div>
<div class="cb" style="top:156px"></div>
<div class="cb" style="top:173px"></div>
<div class="cb" style="top:190px;background:#eef5fc"></div>
<svg class="a" style="left:516px;top:139px" width="17" height="68" viewBox="516 139 17 68">
<path d="M520.3 147.2 L523.8 152.6 L530 142.5" fill="none" stroke="#000" stroke-width="2.2"/>
<path d="M520.3 198.2 L523.8 203.6 L530 193.5" fill="none" stroke="#000" stroke-width="2.2"/>
</svg>
<div class="a tx" style="left:539px;top:141px">Current</div>
<div class="a tx" style="left:539px;top:158px">Velocity base</div>
<div class="a tx" style="left:539px;top:175px">Velocity spectrim in</div>
<div class="a tx" style="left:539px;top:192px;color:#fff">Velocity spectrim out</div>

</body></html>
